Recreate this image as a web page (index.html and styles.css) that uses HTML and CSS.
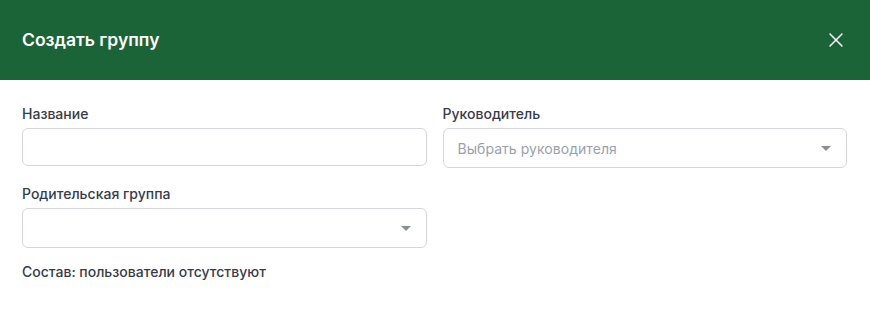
FILE: index.html
```html
<!DOCTYPE html>
<html lang="ru">
<head>
<meta charset="utf-8">
<link rel="stylesheet" href="styles.css">
</head>
<body>
<div class="modal">
  <header class="modal-header">
    <h1 class="modal-title">Создать группу</h1>
    <button class="close-btn" aria-label="Закрыть">
      <svg width="16" height="16" viewBox="0 0 16 16"><path d="M2 2L14 14M14 2L2 14" stroke="#ffffff" stroke-width="1.5" stroke-linecap="round"/></svg>
    </button>
  </header>
  <div class="modal-body">
    <div class="grid">
      <div class="field">
        <label class="label">Название</label>
        <div class="input"></div>
      </div>
      <div class="field">
        <label class="label">Руководитель</label>
        <div class="select"><span class="placeholder">Выбрать руководителя</span><span class="caret"></span></div>
      </div>
      <div class="field">
        <label class="label">Родительская группа</label>
        <div class="select"><span class="placeholder"></span><span class="caret"></span></div>
      </div>
    </div>
    <p class="members">Состав: пользователи отсутствуют</p>
  </div>
</div>
</body>
</html>
```
FILE: styles.css
```css
* { box-sizing: border-box; }
html, body { margin: 0; padding: 0; background: #ffffff; }
body { font-family: Inter, "Noto Sans", sans-serif; }
.modal { width: 870px; }
.modal-header {
  height: 80px;
  background: #1a6437;
  display: flex;
  align-items: center;
  justify-content: space-between;
  padding: 0 26px 0 22px;
}
.modal-title {
  margin: 0;
  color: #ffffff;
  font-size: 17.5px;
  font-weight: 600;
  line-height: 24px;
}
.close-btn {
  background: none;
  border: 0;
  padding: 0;
  width: 16px;
  height: 16px;
  display: flex;
  cursor: pointer;
}
.modal-body { padding: 24px 23px 0 22px; }
.grid {
  display: grid;
  grid-template-columns: 1fr 1fr;
  column-gap: 16px;
  row-gap: 16px;
}
.field { display: flex; flex-direction: column; gap: 4px; }
.label {
  font-size: 14px;
  line-height: 20px;
  color: #353c4a;
  font-weight: 500;
}
.input {
  height: 38px;
  border: 1px solid #d4d6dc;
  border-radius: 6px;
}
.select {
  height: 40px;
  border: 1px solid #d4d6dc;
  border-radius: 6px;
  display: flex;
  align-items: center;
  justify-content: space-between;
  padding: 0 15px 0 14px;
}
.placeholder { font-size: 14px; color: #9ba1ab; letter-spacing: 0.05px; }
.caret {
  width: 0; height: 0;
  border-left: 5px solid transparent;
  border-right: 5px solid transparent;
  border-top: 5px solid #8a8f98;
}
.members {
  margin: 14px 0 0;
  font-size: 14px;
  line-height: 20px;
  color: #353c4a;
  font-weight: 500;
}
```
